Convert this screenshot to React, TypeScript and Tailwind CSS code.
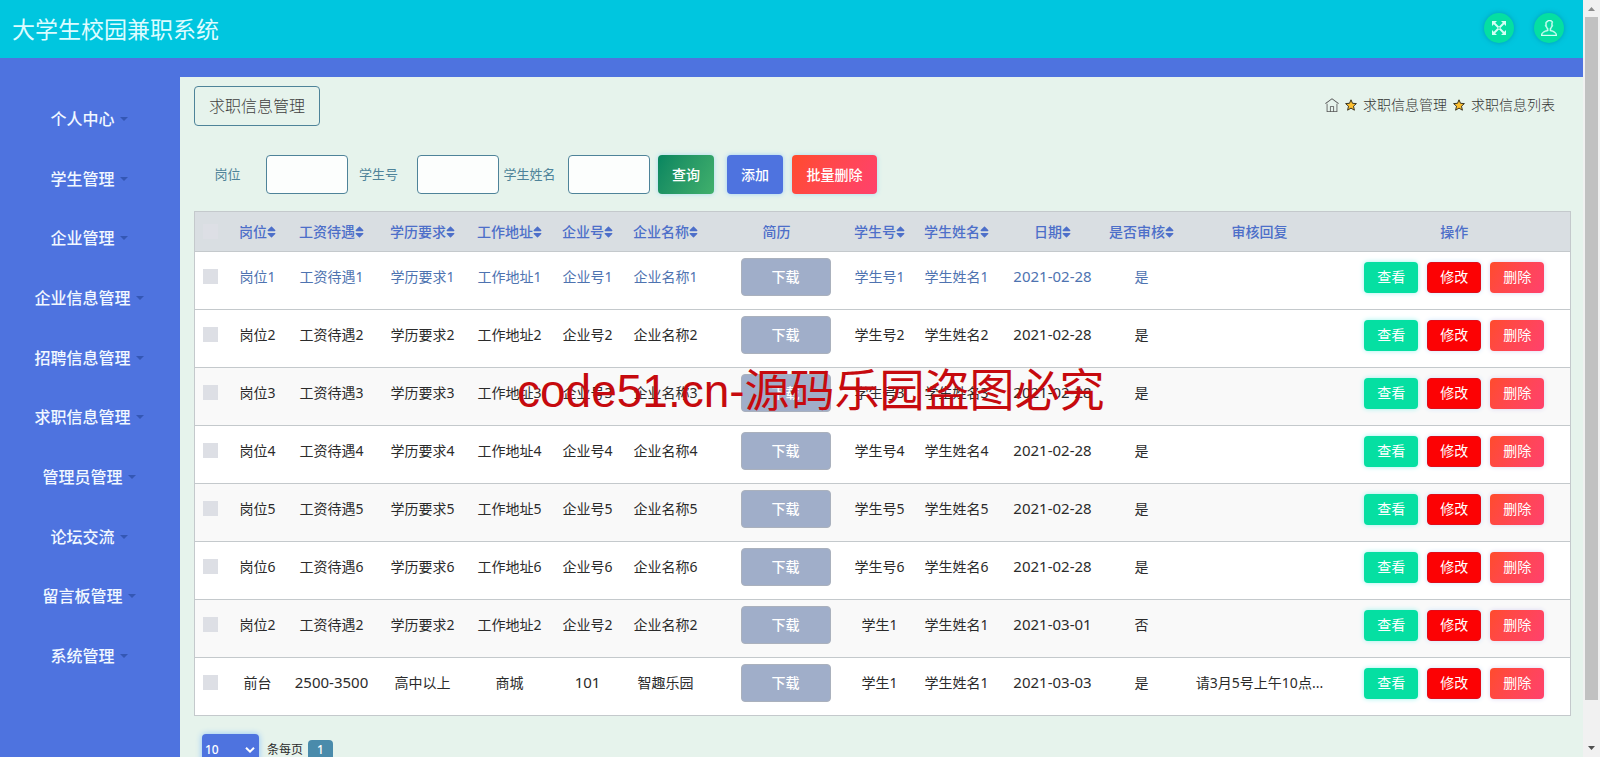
import type { ReactNode } from "react";
import { FaSort } from "react-icons/fa";
import { TfiHome, TfiUser } from "react-icons/tfi";

const menu = [
  "个人中心",
  "学生管理",
  "企业管理",
  "企业信息管理",
  "招聘信息管理",
  "求职信息管理",
  "管理员管理",
  "论坛交流",
  "留言板管理",
  "系统管理",
];

type Column = { title: string; width: string; sortable: boolean };

const columns: Column[] = [
  { title: "岗位", width: "w-[62px]", sortable: true },
  { title: "工资待遇", width: "w-[86px]", sortable: true },
  { title: "学历要求", width: "w-[96px]", sortable: true },
  { title: "工作地址", width: "w-[78px]", sortable: true },
  { title: "企业号", width: "w-[78px]", sortable: true },
  { title: "企业名称", width: "w-[78px]", sortable: true },
  { title: "简历", width: "w-[144px]", sortable: false },
  { title: "学生号", width: "w-[62px]", sortable: true },
  { title: "学生姓名", width: "w-[92px]", sortable: true },
  { title: "日期", width: "w-[100px]", sortable: true },
  { title: "是否审核", width: "w-[78px]", sortable: true },
  { title: "审核回复", width: "w-[158px]", sortable: false },
  { title: "操作", width: "w-[232px]", sortable: false },
];

type Row = { job: string[]; student: string[]; date: string; passed: string; reply: string };

const numbered = (n: number) => [
  `岗位${n}`,
  `工资待遇${n}`,
  `学历要求${n}`,
  `工作地址${n}`,
  `企业号${n}`,
  `企业名称${n}`,
];

const rows: Row[] = [
  ...[1, 2, 3, 4, 5, 6].map((n) => ({
    job: numbered(n),
    student: [`学生号${n}`, `学生姓名${n}`],
    date: "2021-02-28",
    passed: "是",
    reply: "",
  })),
  { job: numbered(2), student: ["学生1", "学生姓名1"], date: "2021-03-01", passed: "否", reply: "" },
  {
    job: ["前台", "2500-3500", "高中以上", "商城", "101", "智趣乐园"],
    student: ["学生1", "学生姓名1"],
    date: "2021-03-03",
    passed: "是",
    reply: "请3月5号上午10点...",
  },
];

function Star() {
  return (
    <svg viewBox="0 0 12 12" className="h-3 w-3" aria-hidden="true">
      <path
        d="M6 .8 7.5 4.3 11.4 4.6 8.5 7.2 9.4 11.2 6 9.1 2.6 11.2 3.5 7.2 .6 4.6 4.5 4.3Z"
        fill="#fdc02f"
        stroke="#3a3420"
        strokeWidth="1"
        strokeLinejoin="round"
      />
    </svg>
  );
}

function ExpandIcon() {
  return (
    <svg viewBox="0 0 14 14" className="h-3.5 w-3.5" aria-hidden="true">
      <path d="M2 2 12 12M12 2 2 12" fill="none" stroke="currentColor" strokeWidth="1.9" />
      <path d="M0 0H5L0 5ZM14 0V5L9 0ZM0 14V9L5 14ZM14 14H9L14 9Z" fill="currentColor" />
      <path d="M7 6 8 7 7 8 6 7Z" fill="#05dfa2" />
    </svg>
  );
}

function Cell({ children }: { children?: ReactNode }) {
  return (
    <td className="p-0 align-top">
      <div className="flex h-[49px] items-center justify-center whitespace-nowrap">{children}</div>
    </td>
  );
}

function Value({ text }: { text: string }) {
  return <span className={/^[\d-]+$/.test(text) ? "text-[15px]" : "text-sm"}>{text}</span>;
}

function RoundButton({ label, children }: { label: string; children: ReactNode }) {
  return (
    <button
      type="button"
      aria-label={label}
      className="flex h-[30px] w-[30px] items-center justify-center rounded-full bg-[#05dfa2] text-[#d4fff4] shadow-[0_0_5px_rgba(0,120,140,0.5)]"
    >
      {children}
    </button>
  );
}

function SearchField({ id, label }: { id: string; label: string }) {
  return (
    <div className="flex items-center">
      <label htmlFor={id} className="w-[69px] pr-2 text-center text-[13px] whitespace-nowrap text-[#4e8399]">
        {label}
      </label>
      <input id={id} type="text" className="h-[39px] w-[82px] rounded border border-[#4e8399] bg-[#fcfefd] px-2 text-sm" />
    </div>
  );
}

export default function App() {
  return (
    <div className="relative flex h-screen overflow-hidden bg-[#4e73df] font-['Noto_Sans','Noto_Sans_CJK_SC',sans-serif] text-sm text-[#2b2b2b]">
      <div className="flex min-w-0 flex-1 flex-col">
        <header className="flex h-[58px] shrink-0 items-center justify-between bg-[#00c6df] pr-[19px] pl-3">
          <h1 className="text-[23px] leading-8 text-[#dcfcff]">大学生校园兼职系统</h1>
          <div className="flex gap-5 pb-0.5">
            <RoundButton label="全屏">
              <ExpandIcon />
            </RoundButton>
            <RoundButton label="用户">
              <TfiUser className="h-4 w-4 stroke-current [stroke-width:0.5]" />
            </RoundButton>
          </div>
        </header>

        <div className="flex min-h-0 flex-1">
          <nav className="w-[180px] shrink-0 pt-[31px] pr-0.5">
            <ul className="grid h-[597px] grid-rows-10">
              {menu.map((item) => (
                <li key={item} className="flex items-center justify-center">
                  <a href="#" className="flex items-center gap-[5px] text-base leading-6 font-medium text-[#f1f8ff]">
                    {item}
                    <svg viewBox="0 0 8 4" className="h-1 w-2 fill-[#3457b4]" aria-hidden="true">
                      <path d="M0 0H8L4 4Z" />
                    </svg>
                  </a>
                </li>
              ))}
            </ul>
          </nav>

          <main className="mt-[19px] min-w-0 flex-1 bg-[#e6f3ec] pt-[9px] pr-[13px] pl-3.5">
            <div className="flex items-center justify-between">
              <h2 className="flex h-10 items-center rounded border border-[#4e8399] px-3.5 text-base font-light text-[#3f3f3f]">
                求职信息管理
              </h2>
              <div className="flex items-center gap-1.5 pr-[15px] pb-0.5 text-sm font-light text-[#333]">
                <a href="#" aria-label="首页">
                  <TfiHome className="h-3.5 w-3.5 text-[#555]" />
                </a>
                <Star />
                <a href="#">求职信息管理</a>
                <Star />
                <span>求职信息列表</span>
              </div>
            </div>

            <form className="mt-[29px] flex items-center pl-[3px]" onSubmit={(e) => e.preventDefault()}>
              <SearchField id="job" label="岗位" />
              <SearchField id="student-no" label="学生号" />
              <SearchField id="student-name" label="学生姓名" />
              <div className="flex pl-2 font-medium text-white">
                <button
                  type="submit"
                  className="h-[39px] w-14 rounded bg-linear-120 from-[#058660] to-[#40b06c] shadow-[0_0_5px_#a9dcf0]"
                >
                  查询
                </button>
                <button type="button" className="ml-[13px] h-[39px] w-14 rounded bg-[#4e73df] shadow-[0_0_5px_#9fd0f5]">
                  添加
                </button>
                <button
                  type="button"
                  className="ml-[9px] h-[39px] w-[85px] rounded bg-linear-120 from-[#ff4b2b] to-[#ff416c] shadow-[0_0_5px_#a9dcf0]"
                >
                  批量删除
                </button>
              </div>
            </form>

            <div className="mt-[17px] pr-0.5">
              <table className="w-full table-fixed border-collapse border border-[#c4c9cc] text-sm">
                <colgroup>
                  <col className="w-[32px]" />
                  {columns.map((c) => (
                    <col key={c.title} className={c.width} />
                  ))}
                </colgroup>
                <thead>
                  <tr className="h-10 border-b border-[#c4c9cc] bg-[#d9dee2] text-[#4d6fc9]">
                    <th className="p-0">
                      <input
                        type="checkbox"
                        aria-label="全选"
                        className="mx-auto block h-[15px] w-[15px] appearance-none bg-[#dddfe5]"
                      />
                    </th>
                    {columns.map((c) => (
                      <th key={c.title} className="p-0 font-medium">
                        <span className="inline-flex items-center whitespace-nowrap">
                          {c.title}
                          {c.sortable && <FaSort className="h-3.5 w-[9px]" />}
                        </span>
                      </th>
                    ))}
                  </tr>
                </thead>
                <tbody>
                  {rows.map((row, i) => (
                    <tr
                      key={i}
                      className={`h-[58px] border-b border-[#c4c9cc] ${i > 0 && i % 2 === 0 ? "bg-[#f9f9f9]" : "bg-white"} ${i === 0 ? "text-[#4e73b0]" : ""}`}
                    >
                      <Cell>
                        <input
                          type="checkbox"
                          aria-label={`选择第${i + 1}行`}
                          className="h-[15px] w-[15px] appearance-none bg-[#dddfe5]"
                        />
                      </Cell>
                      {row.job.map((text, k) => (
                        <Cell key={k}>
                          <Value text={text} />
                        </Cell>
                      ))}
                      <Cell>
                        <button
                          type="button"
                          className="ml-[18px] h-[38px] w-[90px] rounded-sm border border-[#aab1bd] bg-[#a0aec9] font-medium text-white"
                        >
                          下载
                        </button>
                      </Cell>
                      {[...row.student, row.date, row.passed, row.reply].map((text, k) => (
                        <Cell key={k}>
                          <Value text={text} />
                        </Cell>
                      ))}
                      <Cell>
                        <div className="flex gap-[9px] pt-0.5 text-white">
                          <button
                            type="button"
                            className="h-[31px] w-[54px] rounded bg-[#05dfa2] pb-0.5 shadow-[0_0_5px_#9df3ee]"
                          >
                            查看
                          </button>
                          <button
                            type="button"
                            className="h-[31px] w-[54px] rounded border border-[#e30c18] bg-[#fc0204] pb-0.5 shadow-[0_0_5px_#cfe6fb]"
                          >
                            修改
                          </button>
                          <button
                            type="button"
                            className="h-[31px] w-[54px] rounded bg-linear-120 from-[#ff4b2b] to-[#ff416c] pb-0.5 shadow-[0_0_5px_#dcd8f3]"
                          >
                            删除
                          </button>
                        </div>
                      </Cell>
                    </tr>
                  ))}
                </tbody>
              </table>
            </div>

            <div className="mt-[18px] flex h-[31px] items-center pl-2 text-xs">
              <div className="relative">
                <select
                  id="page-size"
                  className="block h-[31px] w-[57px] appearance-none rounded bg-[#4e73df] pl-[3px] text-xs font-medium text-white shadow-[0_0_6px_#8fc4fa]"
                >
                  <option>10</option>
                  <option>20</option>
                  <option>50</option>
                </select>
                <svg
                  viewBox="0 0 10 6"
                  className="pointer-events-none absolute top-[13px] right-1 h-1.5 w-2.5 fill-none stroke-white stroke-2"
                  aria-hidden="true"
                >
                  <path d="M1 .8 5 4.6 9 .8" />
                </svg>
              </div>
              <label htmlFor="page-size" className="ml-2">
                条每页
              </label>
              <button type="button" className="ml-[5px] h-5 w-[25px] rounded bg-[#4a8bab] text-xs font-medium text-white">
                1
              </button>
            </div>
          </main>
        </div>
      </div>

      <div className="flex w-[17px] shrink-0 flex-col items-center bg-[#f1f1f1]" aria-hidden="true">
        <svg viewBox="0 0 17 17" className="h-[17px] w-[17px] shrink-0 fill-[#8b8b8b]">
          <path d="M5 11H12L8.500 7Z" />
        </svg>
        <div className="w-[13px] grow-[17] bg-[#c1c1c1]" />
        <div className="grow" />
        <svg viewBox="0 0 17 17" className="h-[17px] w-[17px] shrink-0 fill-[#505050]">
          <path d="M5 6H12L8.500 10Z" />
        </svg>
      </div>

      <p className="pointer-events-none absolute top-[360px] left-[517px] text-[45px] leading-[60px] whitespace-nowrap text-[#c60a0e]">
        <span className="font-['Liberation_Sans',sans-serif] text-[46px]">code51.cn-</span>
        源码乐园盗图必究
      </p>
    </div>
  );
}
